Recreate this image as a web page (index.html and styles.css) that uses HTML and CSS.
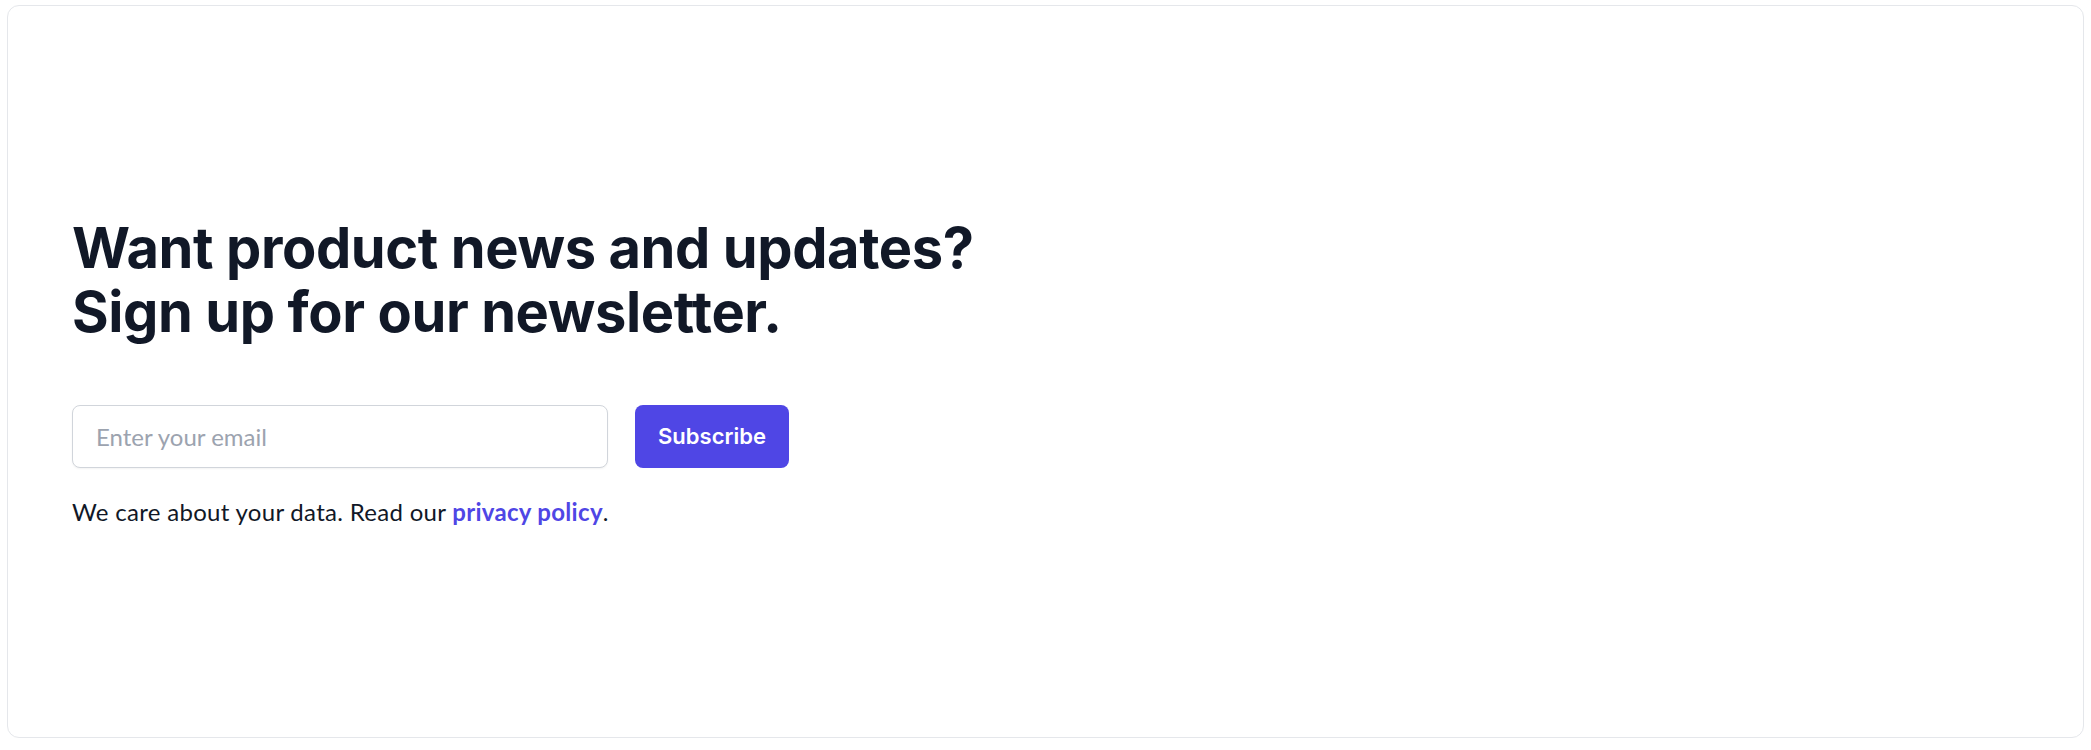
FILE: index.html
```html
<!DOCTYPE html>
<html lang="en">
<head>
<meta charset="utf-8">
<title>Newsletter</title>
<link rel="stylesheet" href="styles.css">
</head>
<body>
<section class="card">
  <div class="content">
    <h2 class="title">Want product news and updates?<br>Sign up for our newsletter.</h2>
    <form class="form">
      <input class="email" type="email" placeholder="Enter your email">
      <button class="btn" type="button">Subscribe</button>
    </form>
    <p class="note">We care about your data. Read our <a class="link" href="#">privacy policy</a>.</p>
  </div>
</section>
</body>
</html>
```
FILE: styles.css
```css
html, body {
  margin: 0;
  padding: 0;
  background: #ffffff;
}
body {
  padding: 5px 7px 12px 7px;
  font-family: "Inter", "Liberation Sans", sans-serif;
}
.card {
  box-sizing: border-box;
  height: 733px;
  border: 1px solid #e5e7eb;
  border-radius: 12px;
  display: flex;
  align-items: center;
  padding: 0 64px;
}
.content {
  display: flex;
  flex-direction: column;
}
.title {
  margin: 0;
  font-size: 56px;
  line-height: 64px;
  font-weight: 700;
  letter-spacing: -0.4px;
  color: #111827;
}
.form {
  display: flex;
  gap: 27px;
  margin: 61px 0 0 0;
}
.email {
  box-sizing: border-box;
  width: 536px;
  height: 63px;
  border: 1px solid #d1d5db;
  border-radius: 8px;
  padding: 0 23px;
  font-family: "Lato", "Liberation Sans", sans-serif;
  font-size: 24px;
  color: #111827;
  box-shadow: 0 1px 2px rgba(0,0,0,0.05);
  outline: none;
}
.email::placeholder {
  color: #9ca3af;
}
.btn {
  box-sizing: border-box;
  width: 154px;
  height: 63px;
  border: none;
  border-radius: 8px;
  background: #4f46e5;
  color: #ffffff;
  font-family: "Inter", "Liberation Sans", sans-serif;
  font-size: 22px;
  font-weight: 600;
}
.note {
  margin: 28px 0 0 0;
  font-family: "Lato", "Liberation Sans", sans-serif;
  font-size: 24px;
  line-height: 32px;
  letter-spacing: 0.3px;
  color: #111827;
}
.link {
  color: #4f46e5;
  font-weight: 700;
  text-decoration: none;
}
```
